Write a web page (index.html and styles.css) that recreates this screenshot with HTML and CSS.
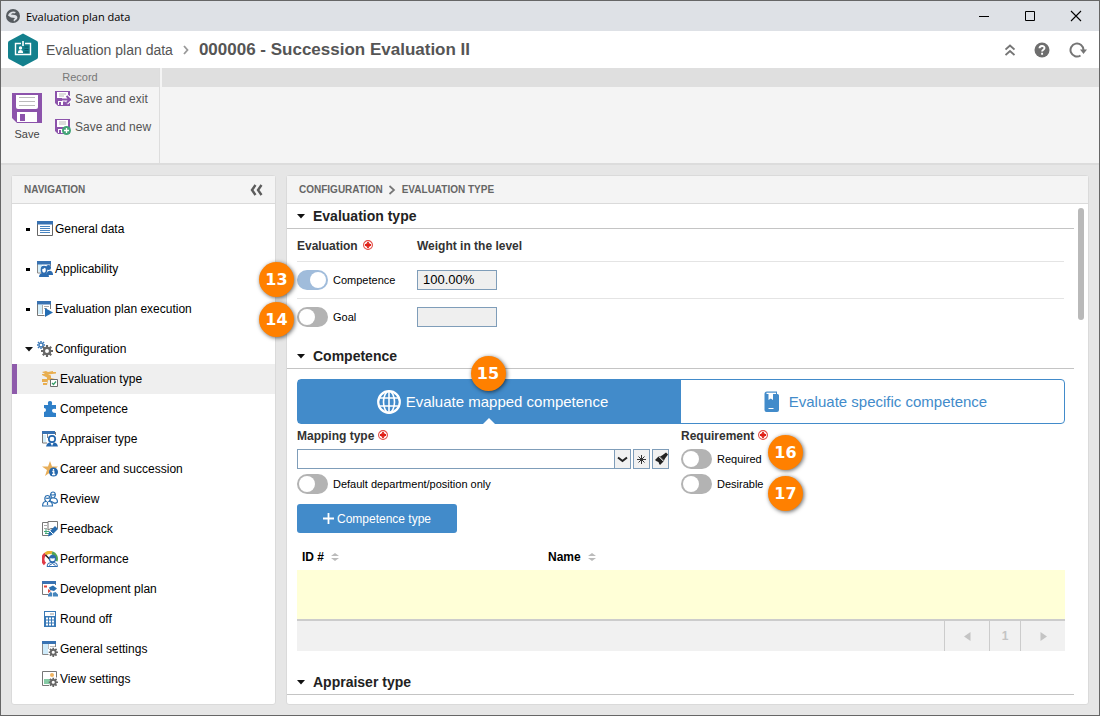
FILE: index.html
```html
<!DOCTYPE html>
<html lang="en">
<head>
<meta charset="utf-8">
<title>Evaluation plan data</title>
<link rel="stylesheet" href="styles.css">
</head>
<body>
<svg class="defs" width="0" height="0" aria-hidden="true">
  <symbol id="required" viewBox="0 0 10 10">
    <circle cx="5" cy="5" r="4.4" fill="#fff" stroke="#e2463f" stroke-width="1.1"/>
    <path d="M5 2v6M2 5h6" stroke="#e02018" stroke-width="1.8"/><path d="M2.800 2.800l1 1M7.200 2.800l-1 1M2.800 7.200l1-1M7.200 7.200l-1-1" stroke="#e02d26" stroke-width=".8"/>
  </symbol>
  <symbol id="gear" viewBox="0 0 10 10">
    <path d="M5 0v10M0 5h10M1.5 1.5l7 7M8.5 1.5l-7 7" stroke="#666" stroke-width="1.8"/>
    <circle cx="5" cy="5" r="2.6" fill="#fff" stroke="#666" stroke-width="1.9"/>
  </symbol>
  <symbol id="floppy" viewBox="0 0 30 30">
    <path d="M0 0h30v30H5l-5-5z" fill="#8c53ab"/>
    <path d="M4 2h22v12a2 2 0 0 1-2 2H6a2 2 0 0 1-2-2z" fill="#fff"/>
    <path d="M7 4.5h16M7 8.5h16M7 12.5h16" stroke="#bbb"/>
    <path d="M5 19h20v10H5z" fill="#fff"/><path d="M8 21h5v7H8z" fill="#8c53ab"/>
  </symbol>
  <symbol id="sort" viewBox="0 0 8 8"><path d="M4 0l4 3H0zM4 8L0 5h8z" fill="#bbb"/></symbol>
  <symbol id="disclosure" viewBox="0 0 8 5"><path d="M0 0h8L4 4.5z" fill="#111"/></symbol>
</svg>

<div class="window">
  <div class="titlebar">
    <svg width="14" height="14" viewBox="0 0 14 14"><circle cx="7" cy="7" r="7" fill="#555a5f"/><path d="M2 6.500C3 3 7 1.500 10 3L8.500 4.500C7 4 5.500 4.500 5 5.500L9 6C11 6.500 12 8 11 10L8 12.500 7.500 11 9 9 5 8.500z" fill="#dee1e6"/></svg>
    <span class="titlebar-text">Evaluation plan data</span>
    <button class="win-btn" aria-label="Minimize"><svg width="12" height="12"><path d="M1 6.500h10" stroke="#000"/></svg></button>
    <button class="win-btn" aria-label="Maximize"><svg width="12" height="12"><path d="M1.500 1.500h9v9h-9z" fill="none" stroke="#000"/></svg></button>
    <button class="win-btn" aria-label="Close"><svg width="12" height="12"><path d="M1 1l10 10M11 1L1 11" stroke="#000" stroke-width="1.100"/></svg></button>
  </div>

  <header class="header">
    <svg width="30" height="34" viewBox="0 0 30 34"><path d="M15 .5l14 7.500q1 .5 1 2v14q0 1.500-1 2L15 33.500 1 26q-1-.5-1-2V10q0-1.500 1-2z" fill="#13808d"/><path d="M13 10.500H7.500v11h15v-11H17" fill="none" stroke="#fff" stroke-width="1.400"/><path d="M15 8v5" stroke="#fff" stroke-width="1.600"/><circle cx="12.500" cy="15" r="1.700" fill="#fff"/><path d="M10 20v-1q0-2 2.500-2t2.500 2v1z" fill="#fff"/><path d="M16.500 14h4M16.500 16.500h4M16.500 19h4" stroke="#075661" stroke-width="1.200"/></svg>
    <a class="crumb" href="#">Evaluation plan data</a>
    <svg width="6" height="10"><path d="M1 1l3.500 4L1 9" fill="none" stroke="#999" stroke-width="1.800"/></svg>
    <h1 class="record-title">000006 - Succession Evaluation II</h1>
    <div class="header-tools">
      <button class="tool" aria-label="Collapse"><svg width="10" height="12"><path d="M.5 5.500L5 1.500l4.500 4M.5 11L5 7l4.500 4" fill="none" stroke="#757575" stroke-width="1.900"/></svg></button>
      <button class="tool" aria-label="Help"><svg width="16" height="16"><circle cx="8" cy="8" r="7.500" fill="#6e6e6e"/><path d="M5.500 6.300C5.500 3.300 10.500 3.200 10.500 6c0 1.700-2.400 1.700-2.400 3.500M8.100 10.700v2" fill="none" stroke="#fff" stroke-width="1.900"/></svg></button>
      <button class="tool" aria-label="Refresh"><svg width="18" height="16"><path d="M11.500 13.500A6.500 6.500 0 1 1 14.500 8" fill="none" stroke="#757575" stroke-width="2"/><path d="M11 7.500h7l-3.500 4.500z" fill="#757575"/></svg></button>
    </div>
  </header>

  <div class="ribbon">
    <section class="ribbon-group">
      <h2 class="ribbon-title">Record</h2>
      <div class="ribbon-actions">
        <button class="save-btn"><svg width="30" height="30"><use href="#floppy"/></svg><span>Save</span></button>
        <div class="ribbon-list">
          <button class="ribbon-btn"><svg width="16" height="16" viewBox="0 0 16 16"><path d="M0 0h15v15H3l-3-3z" fill="#8c53ab"/><path d="M2 1h11v6H2zM3 10h5v4H3z" fill="#fff"/><path d="M4 3h7M4 5h5" stroke="#bbb"/><path d="M7 8.500h7M11.500 5l4 3.500-4 3.500" fill="none" stroke="#fff" stroke-width="4"/><path d="M6 8.500h8M11.500 5l3.500 3.500-3.500 3.500" fill="none" stroke="#8c53ab" stroke-width="2"/><path d="M4 11h2v3H4z" fill="#8c53ab"/></svg>Save and exit</button>
          <button class="ribbon-btn"><svg width="16" height="16" viewBox="0 0 16 16"><path d="M0 0h15v15H3l-3-3z" fill="#8c53ab"/><path d="M2 1h11v7H2zM3 10h8v4H3z" fill="#fff"/><path d="M4 3h7M4 5h7" stroke="#bbb"/><path d="M4 11h2v3H4z" fill="#8c53ab"/><circle cx="11.500" cy="11.500" r="4.500" fill="#43a477"/><path d="M11.500 9v5M9 11.500h5" stroke="#fff" stroke-width="1.300"/></svg>Save and new</button>
        </div>
      </div>
    </section>
    <div class="ribbon-rest"><div class="ribbon-title"></div></div>
  </div>

  <div class="workspace">
    <aside class="panel nav-panel">
      <div class="panel-head">
        <h2 class="panel-title">NAVIGATION</h2>
        <button class="tool" aria-label="Collapse navigation"><svg width="13" height="12"><path d="M5.500 1L2 6l3.500 5M11.500 1L8 6l3.500 5" fill="none" stroke="#5c5c5c" stroke-width="2.400"/></svg></button>
      </div>
      <nav>
        <ul class="nav-list">
          <li><a class="nav-link" href="#"><i class="bullet"></i><svg class="icon" viewBox="0 0 16 16"><path d="M.5 1v13.500h15V1" fill="#fff" stroke="#666"/><path d="M0 0h16v3.500H0z" fill="#3872b2"/><path d="M3 5.500h10M3 7.500h10M3 9.500h10M3 11.500h10" stroke="#4984c0"/></svg>General data</a></li>
          <li><a class="nav-link" href="#"><i class="bullet"></i><svg class="icon" viewBox="0 0 16 16"><path d="M.5 1v11H5M13.500 1v4" fill="none" stroke="#888"/><path d="M1 3h4v8H1z" fill="#d5effb"/><path d="M0 0h14v3.500H0z" fill="#3872b2"/><circle cx="11.500" cy="6.500" r="2.500" fill="#2d6cb0"/><path d="M9 14c1-5 6-6 7-1v1z" fill="#2d6cb0"/><path d="M2 16c0-3 2-4 4-4h2c2 0 4 1 4 4z" fill="#2d6cb0"/><ellipse cx="7" cy="9" rx="2.600" ry="3.500" fill="#fff" stroke="#2d6cb0" stroke-width="1.500"/><path d="M4.500 8q2.500 0 3.500-1.500L9.500 8V6Q7 4 4.500 6z" fill="#2d6cb0"/></svg>Applicability</a></li>
          <li><a class="nav-link" href="#"><i class="bullet"></i><svg class="icon" viewBox="0 0 16 16"><path d="M.5 1v13.500h7M13.500 1v7" fill="none" stroke="#777"/><path d="M1 4h4v9H1z" fill="#d5effb"/><path d="M5.500 4v9M7 5.500h5M7 7.500h3" stroke="#aaa"/><path d="M0 0h14v3.500H0z" fill="#3872b2"/><path d="M8 7l8 4.500L8 16z" fill="#246db3"/></svg>Evaluation plan execution</a></li>
          <li class="branch"><a class="nav-link open" href="#"><svg class="twist" width="8" height="5"><use href="#disclosure"/></svg><svg class="icon" viewBox="0 0 16 16"><path d="M4 0v8M0 4h8M1 1l6 6M7 1L1 7" stroke="#3a77b6" stroke-width="1.500"/><circle cx="4" cy="4" r="1.300" fill="#fff"/><use href="#gear" x="4" y="4" width="12" height="12"/></svg>Configuration</a>
            <ul class="sub-list">
              <li><a class="nav-link active" href="#" aria-current="page"><svg class="icon" viewBox="0 0 16 16"><path d="M0 1l4-1 2 1 5-1v1l3 0v1.500L6 3.500l3 1V7l4 1-1 2-6-1-1 5H1v-2h4v-1H0V8h5V6.500L0 4V3h3z" fill="#e8ae50"/><path d="M8.500 8.500h7v7h-7z" fill="#fff" stroke="#6c6c6c"/><path d="M10 12l1.500 1.500 2.500-3" fill="none" stroke="#369c69" stroke-width="1.200"/></svg>Evaluation type</a></li>
              <li><a class="nav-link" href="#"><svg class="icon" viewBox="0 0 16 16"><path d="M2 4h4.200Q5 0 8 0t1.800 4H14v4q-4-1-4 1.500T14 12v4H2v-5q2 0 2-2T2 7z" fill="#2e7fc8"/></svg>Competence</a></li>
              <li><a class="nav-link" href="#"><svg class="icon" viewBox="0 0 16 16"><path d="M.5 1v11H5M13.500 1v3" fill="none" stroke="#777"/><path d="M1 4h3v7H1z" fill="#d5effb"/><path d="M5.500 3v4" stroke="#888"/><path d="M0 0h13v3H0z" fill="#3872b2"/><path d="M4 15.500q1-4 4-4h4q3 0 4 4z" fill="#2366ad"/><circle cx="10" cy="8" r="3.200" fill="#fff" stroke="#2366ad" stroke-width="1.700"/><path d="M8.500 12h3L10 15z" fill="#fff"/></svg>Appraiser type</a></li>
              <li><a class="nav-link" href="#"><svg class="icon" viewBox="0 0 16 16"><path d="M8 0l2 5.500h6L11.500 9l2 6L8 11.500 3 15l2-6L0 5.500h6z" fill="#e8ae59"/><circle cx="11.500" cy="11" r="4.500" fill="#2467ac"/><path d="M11.500 8v1.500M10.300 10.500h1.500v3M10 13.500h3.300" stroke="#fff" stroke-width="1.300" fill="none"/></svg>Career and succession</a></li>
              <li><a class="nav-link" href="#"><svg class="icon" viewBox="0 0 16 16"><g fill="#fff" stroke="#2d70b0" stroke-width="1.200"><path d="M8 10c0-2 1-3 2.500-3-3-2-2-6 .5-6s3.500 4 .5 6c2.500 0 4 1 4 4-2 2-4 1-5 0z"/><path d="M.6 15c0-3 1-4.500 3.500-4.500C1.500 8 3 4.500 5.500 4.500S9.500 8 7 10.500c2 0 3.500 1.500 3.500 4.500z"/><path d="M3.500 7Q6 8 8 6.500M5.500 11v3M8 3.500q3 1 5 0"/></g></svg>Review</a></li>
              <li><a class="nav-link" href="#"><svg class="icon" viewBox="0 0 16 16"><path d="M6 1.500H.5v13H8M6 7V.5h9.500v7H9L6 9z" fill="#fff" stroke="#777"/><path d="M2 4.500h3M2 7.500h3" stroke="#aaa"/><path d="M2 10.500h5M3 12.500h4M4 8v4" stroke="#45a879"/><path d="M6 15.500l1-4.500 6-6 3 3-6 6z" fill="#286cad"/><path d="M7.500 9.500l4 4" stroke="#fff"/></svg>Feedback</a></li>
              <li><a class="nav-link" href="#"><svg class="icon" viewBox="0 0 16 16"><g fill="none" stroke-width="3.200"><path d="M3 13A6.400 6.400 0 0 1 3.500 3" stroke="#df3b46"/><path d="M3.500 3A6.400 6.400 0 0 1 10 1.800" stroke="#eab330"/><path d="M10 1.800A6.400 6.400 0 0 1 14 10" stroke="#4fa354"/></g><path d="M3.500 4l5 5" stroke="#222" stroke-width="1.500"/><path d="M5 15.500q0-4 4-4h3q3.500 0 3.500 4z" fill="#fff" stroke="#2d6cb0"/><circle cx="10.500" cy="8" r="3" fill="#fff" stroke="#2d6cb0" stroke-width="1.300"/><path d="M7.500 7q4 1 6-.5V5q-4-3-6 1z" fill="#2d6cb0"/><path d="M7 14.500l3.500-2 3 2" stroke="#2d6cb0" fill="none"/></svg>Performance</a></li>
              <li><a class="nav-link" href="#"><svg class="icon" viewBox="0 0 16 16"><path d="M.5 1v12.500H6M13.500 1v3" fill="none" stroke="#777"/><path d="M0 0h14v3H0z" fill="#3872b2"/><path d="M2 4.500h3v2H2z" fill="#df453c"/><path d="M6 8l3 2-3 2z" fill="#df453c"/><path d="M7 6.500l4-2 4 3-3 2.500-4-1z" fill="#2a6faf"/><path d="M6 15.500v-2l2.500-2.500 2 1 3-1 2.500 2.500v2z" fill="#4585bd"/><path d="M10.500 10v6" stroke="#fff" stroke-width=".8"/></svg>Development plan</a></li>
              <li><a class="nav-link" href="#"><svg class="icon" viewBox="0 0 16 16"><path d="M2 0h12v16H2z" fill="#3979b6"/><path d="M3 1h10v4H3z" fill="#fff"/><path d="M8 3h4" stroke="#999"/><path d="M4 7.500h8M4 10.500h8M4 13.500h8" stroke="#fff" stroke-width="2" stroke-dasharray="2 1"/></svg>Round off</a></li>
              <li><a class="nav-link" href="#"><svg class="icon" viewBox="0 0 16 16"><path d="M.5 1v12.500h6M13.500 1v5" fill="none" stroke="#888"/><path d="M1 3h5v10H1z" fill="#cfebfa"/><path d="M8 5.500h5" stroke="#bbb"/><path d="M6.500 3v5" stroke="#bbb"/><path d="M0 0h14v3H0z" fill="#3872b2"/><use href="#gear" x="6.500" y="6.500" width="9.500" height="9.500"/></svg>General settings</a></li>
              <li><a class="nav-link" href="#"><svg class="icon" viewBox="0 0 16 16"><path d="M7 14.500H.5V.5h14v6" fill="none" stroke="#777"/><circle cx="10" cy="4" r="2" fill="#f0b35f"/><path d="M2 8h6v5H2z" fill="#86cba5"/><use href="#gear" x="6.500" y="6.500" width="9.500" height="9.500"/></svg>View settings</a></li>
            </ul>
          </li>
        </ul>
      </nav>
    </aside>

    <main class="panel main-panel">
      <div class="panel-head">
        <h2 class="panel-title">CONFIGURATION</h2>
        <svg class="head-sep" width="8" height="10"><path d="M1.500 1L6 5 1.500 9" fill="none" stroke="#777" stroke-width="1.700"/></svg>
        <h2 class="panel-title">EVALUATION TYPE</h2>
      </div>
      <div class="scroll-thumb"></div>
      <div class="content">
        <h3 class="section-title"><svg width="8" height="5"><use href="#disclosure"/></svg>Evaluation type</h3>
        <table class="weights">
          <thead><tr><th class="eval-col">Evaluation <svg class="req" width="10" height="10"><use href="#required"/></svg></th><th>Weight in the level</th></tr></thead>
          <tbody>
            <tr><td><div class="toggle-row"><label class="toggle"><input type="checkbox" checked>Competence</label><span class="badge badge-before">13</span></div></td><td><input class="weight" aria-label="Competence weight" value="100.00%" readonly></td></tr>
            <tr><td><div class="toggle-row"><label class="toggle"><input type="checkbox">Goal</label><span class="badge badge-before-low">14</span></div></td><td><input class="weight" aria-label="Goal weight" readonly></td></tr>
          </tbody>
        </table>

        <h3 class="section-title gap-s"><svg width="8" height="5"><use href="#disclosure"/></svg>Competence</h3>
        <div class="section-body">
          <div class="tabs">
            <button class="tab selected"><svg width="24" height="24" viewBox="0 0 24 24"><g fill="none" stroke="#fff"><circle cx="12" cy="12" r="10.800" stroke-width="2.200"/><ellipse cx="12" cy="12" rx="5.500" ry="10.800" stroke-width="1.600"/><path d="M12 1v22M2 8h20M2 16h20" stroke-width="1.600"/></g></svg>Evaluate mapped competence<span class="badge badge-top">15</span></button>
            <button class="tab"><svg width="16" height="22" viewBox="0 0 16 22"><path d="M3 .5h10V3h.5q1.500 0 1.500 1.500V19q0 2-2 2H2.500q-2 0-2-2V3Q.5.500 3 .5z" fill="#428bca"/><path d="M2.500 1.700H12V3H2.500z" fill="#fff"/><path d="M4.500 2h4.500v7L6.800 7.500 4.500 9z" fill="#fff"/><path d="M4.500 17.500h5" stroke="#fff"/></svg><span class="tab-text">Evaluate specific competence</span></button>
          </div>
          <div class="columns">
            <div class="mapping">
              <label class="field-label" for="mapping">Mapping type <svg class="req" width="10" height="10"><use href="#required"/></svg></label>
              <div class="combo">
                <div class="select-wrap"><select id="mapping"><option></option></select><span class="select-arrow"><svg width="11" height="7"><path d="M1 1.500L5.500 5 10 1.500" fill="none" stroke="#222" stroke-width="2"/></svg></span></div>
                <button class="mini-btn" aria-label="New"><svg width="11" height="11"><path d="M5.500 1v9M1 5.500h9M2.500 2.500l6 6M8.500 2.500l-6 6" stroke="#333" stroke-width="1"/></svg></button>
                <button class="mini-btn" aria-label="Clear"><svg width="14" height="14"><path d="M1 8l4-4 5 5-4 4q-1-1-1.500-3-2-.5-3.500-2z" fill="#222"/><path d="M6 4.500l4 4 1-2 3-4-2-2-4 3z" fill="#222"/><path d="M4.500 4.500l5 5" stroke="#eee" stroke-width=".8"/></svg></button>
              </div>
              <label class="toggle"><input type="checkbox">Default department/position only</label>
            </div>
            <div class="requirement" role="group" aria-labelledby="req-label">
              <span class="field-label" id="req-label">Requirement <svg class="req" width="10" height="10"><use href="#required"/></svg></span>
              <div class="toggle-row"><label class="toggle"><input type="checkbox">Required</label><span class="badge badge-after">16</span></div>
              <div class="toggle-row"><label class="toggle"><input type="checkbox">Desirable</label><span class="badge badge-after-low">17</span></div>
            </div>
          </div>
          <button class="primary"><svg width="11" height="11"><path d="M5.500 0v11M0 5.500h11" stroke="#fff" stroke-width="1.800"/></svg>Competence type</button>
          <table class="grid">
            <thead><tr><th class="id-col">ID # <svg class="sort" width="8" height="8"><use href="#sort"/></svg></th><th>Name <svg class="sort" width="8" height="8"><use href="#sort"/></svg></th></tr></thead>
            <tbody><tr><td></td><td></td></tr></tbody>
          </table>
          <div class="pager">
            <button class="page-step" aria-label="Previous page"><svg width="7" height="9"><path d="M6.500 0v9L0 4.500z" fill="#c4c4c4"/></svg></button>
            <button class="page-num">1</button>
            <button class="page-step" aria-label="Next page"><svg width="7" height="9"><path d="M.5 0v9L7 4.500z" fill="#c4c4c4"/></svg></button>
          </div>
        </div>
        <h3 class="section-title gap-l"><svg width="8" height="5"><use href="#disclosure"/></svg>Appraiser type</h3>
      </div>
    </main>
  </div>
</div>
</body>
</html>
```
FILE: styles.css
```css
* { box-sizing: border-box; }
body {
  margin: 0;
  font-family: "Liberation Sans", Arial, sans-serif;
  font-size: 12px;
  color: #000;
}
h1, h2, h3, ul { margin: 0; padding: 0; }
ul { list-style: none; }
button {
  font: inherit;
  color: inherit;
  background: none;
  border: 0;
  padding: 0;
}
a { color: inherit; text-decoration: none; }
svg { display: block; flex: none; }
.defs { position: absolute; }

.window {
  display: flex;
  flex-direction: column;
  min-height: 100vh;
  border: 1px solid #666;
  background: #e6e6e6;
}

/* Title bar */
.titlebar {
  display: flex;
  align-items: center;
  height: 30px;
  padding-left: 5px;
  background: #dee1e6;
}
.titlebar-text {
  flex: 1;
  margin-left: 6px;
  font-family: "Open Sans", sans-serif;
  font-size: 11px;
}
.win-btn {
  display: flex;
  justify-content: center;
  align-items: center;
  width: 46px;
  height: 30px;
}

/* Header */
.header {
  display: flex;
  align-items: center;
  height: 37px;
  padding: 0 12px 0 7px;
  background: #fff;
}
.crumb {
  margin: 0 10px 0 8px;
  font-size: 14px;
  color: #555;
}
.record-title {
  margin-left: 10px;
  font-size: 17px;
  line-height: 20px;
  color: #555;
}
.header-tools {
  display: flex;
  align-items: center;
  gap: 19px;
  margin-left: auto;
}

/* Ribbon */
.ribbon {
  display: flex;
  height: 97px;
  border-bottom: 2px solid #dcdcdc;
  background: #f4f4f4;
}
.ribbon-group { width: 159px; border-right: 1px solid #ddd; }
.ribbon-rest { flex: 1; margin-left: 2px; }
.ribbon-title {
  height: 19px;
  background: #dfdfdf;
  color: #777;
  font-size: 11px;
  font-weight: 400;
  line-height: 18px;
  text-align: center;
}
.ribbon-actions { display: flex; gap: 13px; padding: 4px 0 0 11px; }
.save-btn {
  display: flex;
  flex-direction: column;
  align-items: center;
  gap: 5px;
  padding-top: 2px;
  font-size: 11px;
  color: #444;
}
.ribbon-list { display: flex; flex-direction: column; gap: 12px; }
.ribbon-btn {
  display: flex;
  align-items: center;
  gap: 4px;
  height: 16px;
  color: #555;
}

/* Panels */
.workspace {
  display: flex;
  flex: 1;
  gap: 10px;
  padding: 10px;
}
.panel {
  position: relative;
  border: 1px solid #dadada;
  border-radius: 3px;
  background: #fff;
}
.nav-panel { flex: 0 0 265px; }
.main-panel { flex: 1; min-width: 0; }
.panel-head {
  display: flex;
  align-items: center;
  height: 28px;
  padding: 1px 12px 0;
  border-bottom: 1px solid #dadada;
  background: #f4f4f4;
}
.nav-panel .panel-head { justify-content: space-between; }
.panel-title { font-size: 10px; color: #666; line-height: 12px; }
.head-sep { margin: 0 6px 0 5px; }

/* Navigation tree */
.nav-list { padding-top: 5px; }
.nav-link {
  display: flex;
  align-items: center;
  height: 40px;
  padding-left: 14px;
}
.bullet { width: 4px; height: 3px; margin-right: 7px; background: #000; }
.twist { margin-right: 4px; }
.icon { width: 16px; height: 16px; margin-right: 2px; }
.branch { padding-top: 5px; }
.branch .nav-link { height: 30px; }
.branch .open { padding-left: 13px; }
.sub-list .nav-link { padding-left: 25px; border-left: 5px solid transparent; }
.sub-list .active { border-left-color: #8e5bab; background: #efefef; }

/* Main content */
.section-title {
  display: flex;
  align-items: center;
  gap: 8px;
  height: 25px;
  margin-right: 14px;
  padding-left: 10px;
  border-bottom: 1px solid #c4c4c4;
  font-size: 14px;
  color: #222;
}
.gap-s { margin-top: 9px; }
.gap-l { margin-top: 19px; }
.section-body { margin: 10px 23px 0 10px; }
.weights {
  width: calc(100% - 34px);
  margin-left: 10px;
  border-collapse: collapse;
  text-align: left;
}
.weights th { height: 32px; padding: 2px 0 0; border-bottom: 1px solid #e4e4e4; color: #333; }
.weights td { height: 37px; padding: 0; }
.weights tr:first-child td { border-bottom: 1px solid #e4e4e4; }
.eval-col { width: 120px; }
.req { display: inline-block; margin-left: 2px; }
.weight {
  display: block;
  width: 80px;
  height: 20px;
  padding: 0 5px;
  border: 1px solid #7f9db9;
  background: #efefef;
  font: 13px "Liberation Sans", Arial, sans-serif;
}
.toggle-row { position: relative; }
.toggle {
  display: flex;
  align-items: center;
  gap: 5px;
  height: 20px;
  font-size: 11px;
}
.toggle input {
  appearance: none;
  width: 31px;
  height: 20px;
  margin: 0;
  padding: 2px;
  border-radius: 10px;
  background: #b3b3b3;
}
.toggle input::before {
  content: "";
  display: block;
  width: 16px;
  height: 16px;
  border-radius: 8px;
  background: #fff;
}
.toggle input:checked { background: #a0bcdb; }
.toggle input:checked::before { margin-left: 11px; }

/* Numbered callouts */
.badge {
  position: absolute;
  width: 35px;
  height: 35px;
  border-radius: 50%;
  background: #ff8000;
  box-shadow: 1px 1px 4px rgba(0, 0, 0, .6);
  color: #fff;
  font: bold 16px/35px "DejaVu Sans", Verdana, sans-serif;
  text-align: center;
}
.badge-before { left: -38px; top: -8px; }
.badge-before-low { left: -38px; top: -5px; }
.badge-top { left: calc(50% - 19px); top: -24px; }
.badge-after { left: 87px; top: -14px; }
.badge-after-low { left: 87px; top: 2px; }

/* Mode tabs */
.tabs {
  display: flex;
  height: 45px;
  border: 1px solid #428bca;
  border-radius: 4px;
}
.tab {
  position: relative;
  display: flex;
  flex: 1;
  justify-content: center;
  align-items: center;
  gap: 5px;
  padding-left: 6px;
  color: #428bca;
  font-size: 15px;
}
.tab.selected { background: #428bca; color: #fff; }
.tab.selected::after {
  content: "";
  position: absolute;
  left: calc(50% - 7px);
  bottom: -1px;
  border: solid transparent;
  border-width: 0 6px 6px;
  border-bottom-color: #fff;
}
.tab-text { margin-left: 4px; }

.columns { display: grid; grid-template-columns: 1fr 1fr; }
.mapping { padding-right: 12px; }
.field-label { display: block; font-weight: 700; color: #333; line-height: 25px; }
.field-label .req { margin-left: 0; }
.mapping .toggle, .toggle-row + .toggle-row { margin-top: 5px; }
.combo { display: flex; gap: 2px; height: 20px; }
.select-wrap { position: relative; flex: 1; }
.select-wrap select {
  display: block;
  appearance: none;
  width: 100%;
  height: 20px;
  border: 1px solid #7f9db9;
  border-radius: 0;
  background: #fff;
}
.select-arrow, .mini-btn {
  display: flex;
  justify-content: center;
  align-items: center;
  width: 17px;
  height: 20px;
  border: 1px solid #7f9db9;
  background: #f1f1f1;
}
.select-arrow { position: absolute; right: 0; top: 0; pointer-events: none; }
.primary {
  display: flex;
  justify-content: center;
  align-items: center;
  gap: 3px;
  width: 160px;
  height: 29px;
  margin-top: 10px;
  border-radius: 3px;
  background: #428bca;
  color: #fff;
}

/* Competence grid */
.grid {
  width: 100%;
  margin-top: 10px;
  border-collapse: collapse;
  text-align: left;
}
.grid th { height: 27px; padding: 0 5px; }
.id-col { width: 246px; }
.sort { display: inline-block; margin-left: 4px; }
.grid td { height: 49px; padding: 0; background: #ffffd7; }
.pager {
  display: flex;
  justify-content: flex-end;
  height: 32px;
  border-top: 2px solid #ccc;
  background: #f1f1f1;
}
.pager button {
  display: flex;
  justify-content: center;
  align-items: center;
  border-left: 1px solid #ccc;
  color: #c4c4c4;
  font-weight: 700;
}
.page-step { width: 45px; }
.page-num { width: 31px; }

/* Overlay scrollbar */
.scroll-thumb {
  position: absolute;
  right: 4px;
  top: 32px;
  width: 6px;
  height: 112px;
  border-radius: 3px;
  background: #b9b9b9;
}
```
